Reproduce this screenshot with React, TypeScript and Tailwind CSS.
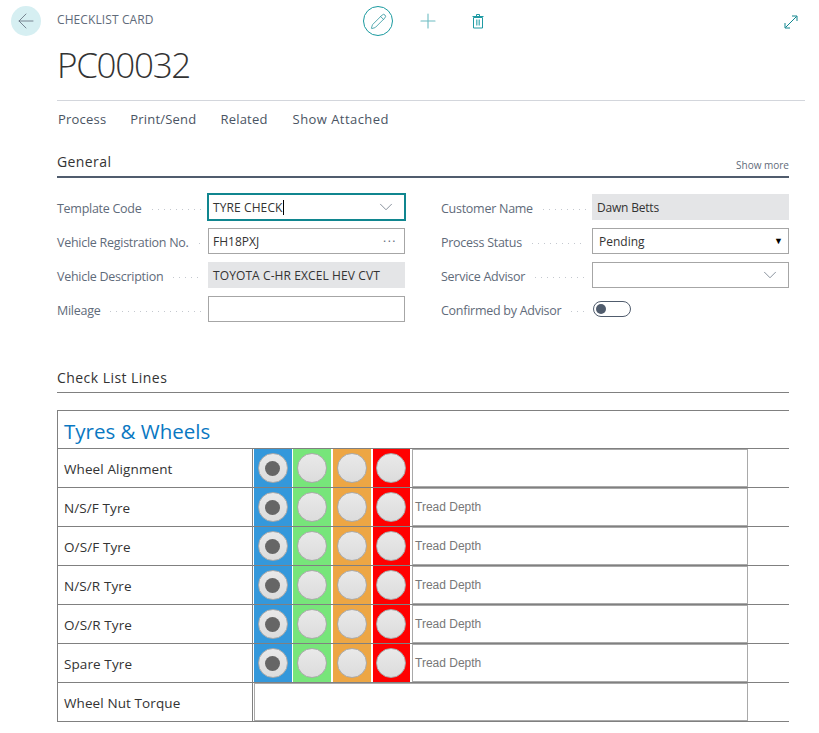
import React from 'react';
import { ArrowLeft, ChevronDown, Pencil, Plus } from 'lucide-react';

const font = "font-['Open_Sans','Noto_Sans',sans-serif]";

const Leader: React.FC = () => (
  <div className="ml-[10px] mr-[6px] h-px flex-1 bg-[repeating-linear-gradient(90deg,#c4c8cf_0_1px,transparent_1px_6px)]" />
);

const Field: React.FC<{ label: string; children: React.ReactNode }> = ({ label, children }) => (
  <div className="flex h-[26px] items-center">
    <div className="flex w-[151px] items-center pt-[5px]">
      <span className="whitespace-nowrap text-[12.5px] tracking-[-0.27px] text-[#5f6b7a]">{label}</span>
      <Leader />
    </div>
    <div className="h-[26px] w-[197px]">{children}</div>
  </div>
);

const BoxField: React.FC<{ value?: string; focus?: boolean; right?: React.ReactNode; textClass?: string }> = ({
  value,
  focus,
  right,
  textClass = 'pl-[4px]',
}) => (
  <div
    className={`flex h-full items-center justify-between border bg-white pr-[7px] text-[12px] text-[#333] ${
      focus ? 'border-[#10868f] shadow-[0_0_0_1px_#10868f]' : 'border-[#a6a6a6]'
    }`}
  >
    <span className={`flex items-center pt-px ${textClass}`}>
      {value}
      {focus && <span className="h-[15px] w-px bg-black" />}
    </span>
    {right}
  </div>
);

const ReadOnly: React.FC<{ value: string; tracking: string }> = ({ value, tracking }) => (
  <div className={`flex h-full items-center bg-[#e4e5e7] pl-[5px] pt-px text-[12px] text-[#333] ${tracking}`}>{value}</div>
);

const Radio: React.FC<{ on?: boolean }> = ({ on }) => (
  <div className="flex size-[30px] shrink-0 items-center justify-center rounded-full border border-[#aaaaaa] bg-[linear-gradient(#e9e9e9,#dcdcdc)]">
    {on && <div className="size-[15px] rounded-full bg-[#666666]" />}
  </div>
);

const Swatch: React.FC<{ className: string; on?: boolean }> = ({ className, on }) => (
  <div className={`flex h-full items-start justify-center pt-[4px] ${className}`}>
    <Radio on={on} />
  </div>
);

const lines = [
  { label: 'Wheel Alignment', note: '' },
  { label: 'N/S/F Tyre', note: 'Tread Depth' },
  { label: 'O/S/F Tyre', note: 'Tread Depth' },
  { label: 'N/S/R Tyre', note: 'Tread Depth' },
  { label: 'O/S/R Tyre', note: 'Tread Depth' },
  { label: 'Spare Tyre', note: 'Tread Depth' },
];

const RowLabel: React.FC<{ text: string }> = ({ text }) => (
  <div className="flex h-full w-[195px] items-center border-r border-[#808080] pl-[6px] pt-[2px] text-[13.5px] tracking-[0.1px] text-[#333]">
    {text}
  </div>
);

export default function App() {
  const chevron = <ChevronDown size={22} strokeWidth={0.8} className="-ml-[2px] text-[#5f6b7a]" />;

  return (
    <div className={`h-[733px] w-[819px] overflow-hidden bg-white ${font}`}>
      {/* Header */}
      <div className="flex pl-[11px] pt-[6px]">
        <div className="flex size-[30px] items-center justify-center rounded-full bg-[#d6eff2]">
          <ArrowLeft size={24} strokeWidth={0.8} className="text-[#5f6b7a]" />
        </div>
        <div className="ml-[16px] w-[306px] pt-[6px] text-[12px] font-medium leading-[16px] tracking-[0.1px] text-[#5f6b7a]">CHECKLIST CARD</div>
        <div className="flex size-[30px] items-center justify-center rounded-full border border-[#1a9a9f]">
          <Pencil size={17} strokeWidth={1} className="text-[#10868f]" />
        </div>
        <div className="ml-[28px] flex h-[30px] w-[14px] items-center justify-center">
          <Plus size={24} strokeWidth={1.1} className="shrink-0 text-[#6dbcc2]" />
        </div>
        <div className="ml-[37px] flex h-[30px] w-[12px] items-center justify-center">
          <svg width="12" height="15" viewBox="0 0 12 15" fill="none" stroke="#1f9aa3" strokeWidth="1">
            <path d="M1.5 3.5h9v10.500h-9zM.5 2.500h11M4.500 2.500v-2h3v2" />
            <path d="M4.500 5.500v6M6 5.500v6M7.500 5.500v6" stroke="#5fb9bf" />
          </svg>
        </div>
        <div className="ml-[300px] flex h-[30px] w-[14px] items-center justify-center">
          <svg className="mt-[2px]" width="14" height="14" viewBox="0 0 14 14" fill="none" stroke="#10868f" strokeWidth="1">
            <path d="M1.500 12.500L12.500 1.500M8 1h5v5M1 8v5h5" />
          </svg>
        </div>
      </div>

      <div className="ml-[57px] mt-[6px] h-[59px] w-[748px] border-b border-[#d3d6dc]">
        <div className="text-[35px] font-light leading-[46px] tracking-[-1.3px] text-[#333]">PC00032</div>
      </div>

      <div className="ml-[58px] mt-[9px] flex gap-[24px] text-[13px] leading-[18px] tracking-[0.2px] text-[#4a5463]">
        <span>Process</span>
        <span>Print/Send</span>
        <span>Related</span>
        <span className="ml-px tracking-[0.45px]">Show Attached</span>
      </div>

      {/* General */}
      <div className="ml-[57px] mt-[23px] flex h-[27px] w-[732px] justify-between border-b-2 border-[#505c6d] pt-px">
        <span className="text-[14px] font-medium leading-[20px] tracking-[0.4px] text-[#333]">General</span>
        <span className="pt-[4px] text-[10px] leading-[18px] text-[#5f6b7a]">Show more</span>
      </div>

      <div className="ml-[57px] mt-[16px] grid w-[732px] grid-cols-[348px_348px] gap-x-[36px] gap-y-[8px]">
        <Field label="Template Code">
          <BoxField value="TYRE CHECK" focus right={chevron} textClass="pl-[4px] tracking-[0.1px]" />
        </Field>
        <Field label="Customer Name">
          <ReadOnly value="Dawn Betts" tracking="tracking-[-0.2px]" />
        </Field>
        <Field label="Vehicle Registration No.">
          <BoxField value="FH18PXJ" right={<span className="pb-[6px] text-[12px] tracking-[1.5px] text-[#5f6b7a]">...</span>} />
        </Field>
        <Field label="Process Status">
          <BoxField value="Pending" textClass="pl-[6px]" right={<span className="-mr-[2px] text-[9px] text-black">▼</span>} />
        </Field>
        <Field label="Vehicle Description">
          <ReadOnly value="TOYOTA C-HR EXCEL HEV CVT" tracking="tracking-[0.1px]" />
        </Field>
        <Field label="Service Advisor">
          <BoxField right={chevron} />
        </Field>
        <Field label="Mileage">
          <BoxField />
        </Field>
        <Field label="Confirmed by Advisor">
          <div className="flex h-full items-center pl-[1px]">
            <div className="flex h-[16px] w-[38px] items-center rounded-full border border-[#505c6d] pl-[2px]">
              <div className="size-[10px] rounded-full bg-[#505c6d]" />
            </div>
          </div>
        </Field>
      </div>

      {/* Check list lines */}
      <div className="ml-[57px] mt-[46px] h-[25px] w-[732px] border-b border-[#808080] text-[14px] font-medium leading-[20px] tracking-[0.45px] text-[#333]">
        Check List Lines
      </div>

      <div className="ml-[57px] mt-[17px] w-[732px] border-l border-t border-[#808080]">
        <div className="flex h-[38px] items-center border-b border-[#808080] pl-[6px] pt-[4px] text-[20.500px] text-[#0a78c2]">Tyres &amp; Wheels</div>
        {lines.map((line) => (
          <div key={line.label} className="flex h-[39px] border-b border-[#808080]">
            <RowLabel text={line.label} />
            <div className="ml-px flex h-full">
              <Swatch className="w-[38px] bg-[#3498db] pr-px" on />
              <Swatch className="ml-px w-[38px] bg-[#77e57a]" />
              <Swatch className="ml-[2px] w-[38px] bg-[#eda644]" />
              <Swatch className="ml-[2px] w-[37px] bg-[#ff0000] pr-px" />
            </div>
            <div className="ml-[2px] flex h-full w-[336px] items-center border border-[#a9a9a9] pl-[2px] font-['Liberation_Sans',sans-serif] text-[12px] text-[#777777]">
              {line.note}
            </div>
          </div>
        ))}
        <div className="flex h-[39px] border-b border-[#808080]">
          <RowLabel text="Wheel Nut Torque" />
          <div className="ml-px h-full w-[494px] border border-[#a9a9a9]" />
        </div>
      </div>
    </div>
  );
}
